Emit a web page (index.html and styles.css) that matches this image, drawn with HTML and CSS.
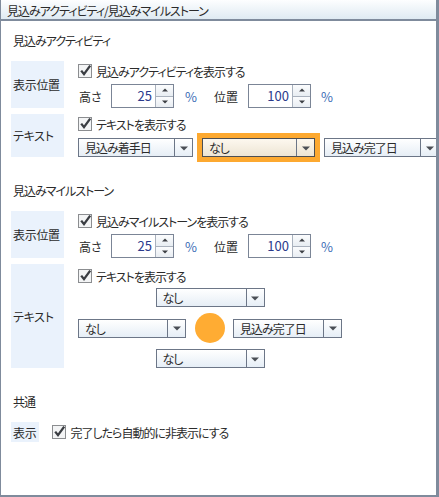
FILE: index.html
```html
<!DOCTYPE html>
<html lang="ja">
<head>
  <meta charset="UTF-8">
  <title>見込みアクティビティ/見込みマイルストーン</title>
  <link rel="stylesheet" href="styles.css">
</head>
<body>
  <!-- チェックマークの共通シンボル -->
  <svg class="defs" width="0" height="0">
    <symbol id="chk" viewBox="0 0 14 14">
      <rect x="0.5" y="0.5" width="13" height="13" fill="#f3f4f5" stroke="#8b8d90"/>
      <path d="M3.2 6.6 L6 10.2 L12.2 1.6" fill="none" stroke="#3a3d42" stroke-width="2.3"/>
    </symbol>
  </svg>

  <div class="panel">
    <div class="titlebar">見込みアクティビティ/見込みマイルストーン</div>

    <div class="panel-body">
      <!-- 見込みアクティビティ -->
      <section class="group">
        <h2 class="group-title">見込みアクティビティ</h2>

        <div class="row">
          <div class="row-label">表示位置</div>
          <div class="row-content">
            <label class="check"><svg class="box"><use href="#chk"/></svg>見込みアクティビティを表示する</label>
            <div class="size-line">
              <span class="field-label">高さ</span>
              <div class="spin"><span class="spin-value">25</span><span class="spin-btns"><span class="up"></span><span class="down"></span></span></div>
              <span class="unit">%</span>
              <span class="field-label pos">位置</span>
              <div class="spin"><span class="spin-value">100</span><span class="spin-btns"><span class="up"></span><span class="down"></span></span></div>
              <span class="unit last">%</span>
            </div>
          </div>
        </div>

        <div class="row">
          <div class="row-label">テキスト</div>
          <div class="row-content">
            <label class="check"><svg class="box"><use href="#chk"/></svg>テキストを表示する</label>
            <div class="combo-line">
              <div class="combo w115"><span class="combo-text">見込み着手日</span><span class="combo-btn"></span></div>
              <div class="combo w113 active"><span class="combo-text">なし</span><span class="combo-btn"></span></div>
              <div class="combo w115"><span class="combo-text">見込み完了日</span><span class="combo-btn"></span></div>
            </div>
          </div>
        </div>
      </section>

      <!-- 見込みマイルストーン -->
      <section class="group">
        <h2 class="group-title">見込みマイルストーン</h2>

        <div class="row">
          <div class="row-label">表示位置</div>
          <div class="row-content">
            <label class="check"><svg class="box"><use href="#chk"/></svg>見込みマイルストーンを表示する</label>
            <div class="size-line">
              <span class="field-label">高さ</span>
              <div class="spin"><span class="spin-value">25</span><span class="spin-btns"><span class="up"></span><span class="down"></span></span></div>
              <span class="unit">%</span>
              <span class="field-label pos">位置</span>
              <div class="spin"><span class="spin-value">100</span><span class="spin-btns"><span class="up"></span><span class="down"></span></span></div>
              <span class="unit last">%</span>
            </div>
          </div>
        </div>

        <div class="row">
          <div class="row-label">テキスト</div>
          <div class="row-content tall">
            <label class="check"><svg class="box"><use href="#chk"/></svg>テキストを表示する</label>
            <div class="ms-grid">
              <div class="combo w109 span-all"><span class="combo-text">なし</span><span class="combo-btn"></span></div>
              <div class="combo w108"><span class="combo-text">なし</span><span class="combo-btn"></span></div>
              <div class="marker"></div>
              <div class="combo w109"><span class="combo-text">見込み完了日</span><span class="combo-btn"></span></div>
              <div class="combo w109 span-all"><span class="combo-text">なし</span><span class="combo-btn"></span></div>
            </div>
          </div>
        </div>
      </section>

      <!-- 共通 -->
      <section class="group">
        <h2 class="group-title">共通</h2>
        <div class="row short">
          <div class="row-label">表示</div>
          <label class="check"><svg class="box"><use href="#chk"/></svg>完了したら自動的に非表示にする</label>
        </div>
      </section>
    </div>
  </div>
</body>
</html>
```

FILE: styles.css
```css
body {
  margin: 0;
  font-family: "Noto Sans CJK JP", "Noto Sans", sans-serif;
  font-size: 12px;
  font-feature-settings: "palt";
  letter-spacing: -1px;
  color: #2b2b2b;
  background: #fff;
}

.defs {
  position: absolute;
}

.panel {
  width: 439px;
  height: 497px;
  box-sizing: border-box;
  border-left: 1px solid #7f8b9c;
  border-right: 3px solid #7f8b9c;
  border-bottom: 2px solid #7f8b9c;
  overflow: hidden;
}

.titlebar {
  height: 21px;
  line-height: 19px;
  padding: 1px 0 0 6px;
  box-sizing: border-box;
  background: linear-gradient(#fdfeff, #dfeaf2);
  border-bottom: 2px solid #7f8b9c;
  white-space: nowrap;
}

.panel-body {
  padding: 11px 0 0 10px;
}

.group + .group {
  margin-top: 25px;
}

.group-title {
  margin: 0 0 11px;
  padding-left: 2px;
  font-size: 12px;
  font-weight: normal;
  line-height: 18px;
}

.row {
  display: flex;
  margin-bottom: 6px;
}

.row-label {
  width: 53px;
  flex-shrink: 0;
  display: flex;
  align-items: center;
  padding-left: 2px;
  box-sizing: border-box;
  background: #eaf2fc;
  letter-spacing: -0.3px;
  white-space: nowrap;
}

.row-content {
  margin-left: 14px;
  padding-top: 1px;
  display: flex;
  flex-direction: column;
}

.row-content.tall {
  padding-top: 3px;
}

/* チェックボックス */
.check {
  display: flex;
  align-items: center;
  height: 18px;
  white-space: nowrap;
}

.check .box {
  width: 14px;
  height: 14px;
  margin-right: 4px;
  flex-shrink: 0;
}

/* 高さ・位置 */
.size-line {
  display: flex;
  align-items: center;
  margin-top: 4px;
}

.field-label {
  width: 33px;
  padding-left: 1px;
  box-sizing: border-box;
  letter-spacing: 0;
}

.field-label.pos {
  width: 35px;
}

.unit {
  width: 28px;
  margin-left: 11px;
  font-size: 13px;
  letter-spacing: 0;
  color: #3a6cb5;
}

.unit.last {
  margin-left: 10px;
}

.spin {
  display: flex;
  width: 63px;
  height: 24px;
  box-sizing: border-box;
  border: 1px solid #7b8596;
  background: #fff;
}

.spin-value {
  flex: 1;
  text-align: right;
  padding-right: 3px;
  line-height: 22px;
  font-size: 13px;
  letter-spacing: 0;
  color: #2b3a8c;
}

.spin-btns {
  width: 17px;
  display: flex;
  flex-direction: column;
  border-left: 1px solid #a9b1bd;
}

.spin-btns span {
  flex: 1;
  position: relative;
  background: linear-gradient(#fbfcfd, #e8edf2);
}

.spin-btns .up {
  border-bottom: 1px solid #a9b1bd;
}

.spin-btns span::after {
  content: '';
  position: absolute;
  left: 50%;
  top: 50%;
  transform: translate(-50%, -50%);
  border-left: 3px solid transparent;
  border-right: 3px solid transparent;
}

.spin-btns .up::after {
  border-bottom: 3px solid #3c3f44;
}

.spin-btns .down::after {
  border-top: 3px solid #3c3f44;
}

/* コンボボックス */
.combo-line {
  display: flex;
  gap: 9px;
  margin-top: 5px;
}

.combo {
  display: flex;
  height: 19px;
  box-sizing: border-box;
  flex-shrink: 0;
  border: 1px solid #6c7687;
  background: linear-gradient(#ffffff, #e6eef6);
}

.combo.active {
  border-color: #4d4f52;
  background: linear-gradient(#fdf8ef, #ede5d4);
  outline: 5px solid #fda930;
}

.w108 { width: 108px; }
.w109 { width: 109px; }
.w113 { width: 113px; }
.w115 { width: 115px; }

.combo-text {
  flex: 1;
  padding-left: 6px;
  line-height: 17px;
  white-space: nowrap;
}

.combo-btn {
  width: 17px;
  position: relative;
  border-left: 1px solid #6c7687;
}

.combo-btn::after {
  content: '';
  position: absolute;
  left: 50%;
  top: 50%;
  transform: translate(-50%, -40%);
  border-left: 4px solid transparent;
  border-right: 4px solid transparent;
  border-top: 4px solid #4a4e55;
}

/* マイルストーンのテキスト配置 */
.ms-grid {
  display: grid;
  grid-template-columns: 109px 30px 109px;
  column-gap: 8px;
  row-gap: 6px;
  align-items: center;
  margin-top: 3px;
}

.span-all {
  grid-column: 1 / -1;
  justify-self: center;
}

.marker {
  width: 30px;
  height: 30px;
  border-radius: 50%;
  background: #ffac33;
}

.row.short {
  align-items: center;
}

.row.short .row-label {
  width: auto;
  height: 20px;
  padding: 0 3px 0 2px;
}

.row.short .check {
  margin-left: 13px;
}
```
